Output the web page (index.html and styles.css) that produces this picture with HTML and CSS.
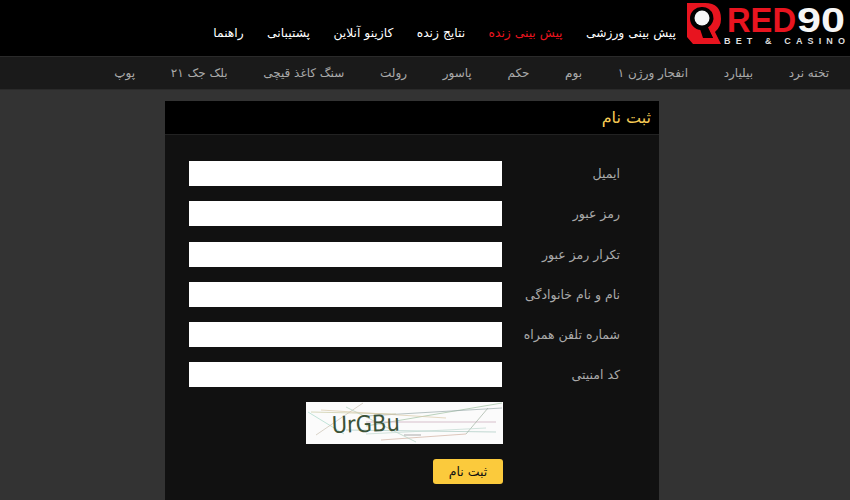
FILE: index.html
```html
<!DOCTYPE html>
<html lang="fa" dir="rtl">
<head>
<meta charset="utf-8">
<title>ثبت نام</title>
<link rel="stylesheet" href="styles.css">
</head>
<body>
<header class="topbar">
  <a class="logo" href="#">
    <svg width="160" height="46" viewBox="0 0 160 46">
      <path fill="#e8141f" d="M1 2H19Q35 2 35 18Q35 26 29 31L35 43H7L1 36Z"/>
      <path fill="#000" d="M16 6A11 11 0 0 1 22 26.500L27 37H21L15 29A11 11 0 0 1 16 6Z"/>
      <path fill="#000" d="M14 28L17 37H27L22 27Z"/>
      <circle cx="16" cy="17" r="7.500" fill="#f6f6f6"/>
      <text class="logo-red" x="41" y="31" textLength="69" lengthAdjust="spacingAndGlyphs">RED</text>
      <text class="logo-num" x="111" y="31" textLength="48" lengthAdjust="spacingAndGlyphs">90</text>
      <text class="logo-sub" x="38" y="43" textLength="121">BET &amp; CASINO</text>
    </svg>
  </a>
  <nav class="mainnav">
    <a href="#">پیش بینی ورزشی</a>
    <a href="#" class="live">پیش بینی زنده</a>
    <a href="#">نتایج زنده</a>
    <a href="#">کازینو آنلاین</a>
    <a href="#">پشتیبانی</a>
    <a href="#">راهنما</a>
  </nav>
</header>
<nav class="subnav">
  <a href="#">تخته نرد</a>
  <a href="#">بیلیارد</a>
  <a href="#">انفجار ورژن ۱</a>
  <a href="#">بوم</a>
  <a href="#">حکم</a>
  <a href="#">پاسور</a>
  <a href="#">رولت</a>
  <a href="#">سنگ کاغذ قیچی</a>
  <a href="#">بلک جک ۲۱</a>
  <a href="#">پوپ</a>
</nav>
<main class="card">
  <h1 class="card-title">ثبت نام</h1>
  <form class="form">
    <label class="row"><span class="label">ایمیل</span><input class="field" type="text"></label>
    <label class="row"><span class="label">رمز عبور</span><input class="field" type="password"></label>
    <label class="row"><span class="label">تکرار رمز عبور</span><input class="field" type="password"></label>
    <label class="row"><span class="label">نام و نام خانوادگی</span><input class="field" type="text"></label>
    <label class="row"><span class="label">شماره تلفن همراه</span><input class="field" type="text"></label>
    <label class="row"><span class="label">کد امنیتی</span><input class="field" type="text"></label>
    <div class="captcha-row">
      <svg class="captcha" width="197" height="42" viewBox="0 0 197 42">
        <rect width="197" height="42" fill="#fbfbfb"/>
        <g fill="none" stroke-width="0.700">
          <path stroke="#9fc0a0" d="M60 24L196 1"/>
          <path stroke="#c9c9a0" d="M5 10L90 12"/>
          <path stroke="#a8d8c8" d="M2 10L38 32"/>
          <path stroke="#c8c0b0" d="M10 33L57 1"/>
          <path stroke="#c8a8b8" d="M60 20L190 20"/>
          <path stroke="#a8c8c0" d="M40 28L190 30"/>
          <path stroke="#d0b0a0" d="M75 38L160 32"/>
          <path stroke="#a0b0a0" d="M160 32L182 6"/>
          <path stroke="#b0d0c0" d="M40 5L110 40"/>
          <path stroke="#9aa" d="M60 14L196 6"/>
          <path stroke="#d8c8a8" d="M15 8L140 16"/>
          <path stroke="#c0d8d0" d="M60 32L180 26"/>
          <path stroke="#888" d="M98 33H115"/>
        </g>
        <text class="captcha-text" x="26" y="31" textLength="68" lengthAdjust="spacingAndGlyphs" transform="rotate(-2 26 31)">UrGBu</text>
      </svg>
    </div>
    <div class="submit-row"><button class="submit" type="button">ثبت نام</button></div>
  </form>
</main>
</body>
</html>
```

FILE: styles.css
```css
* { box-sizing: border-box; }
html, body { margin: 0; height: 100%; overflow: hidden; }
body {
  background: #333;
  font-family: "DejaVu Sans", sans-serif;
  color: #ccc;
}
a { text-decoration: none; }
.topbar {
  height: 56px;
  background: #000;
  display: flex;
  align-items: flex-start;
  padding-right: 4px;
}
.logo { display: block; width: 160px; height: 46px; margin-top: 1px; }
.logo svg { display: block; direction: ltr; }
.logo-red, .logo-num {
  font-family: "Liberation Sans", sans-serif;
  font-weight: 700;
  font-size: 35px;
}
.logo-red { fill: #e8141f; }
.logo-num { fill: #f6f6f6; }
.logo-sub {
  font-family: "Liberation Sans", sans-serif;
  font-weight: 700;
  font-size: 9px;
  fill: #ddd;
}
.mainnav {
  display: flex;
  gap: 23.400px;
  margin-right: 10px;
  padding-top: 24px;
}
.mainnav a { color: #fff; font-size: 12.300px; line-height: 18px; white-space: nowrap; }
.mainnav a.live { color: #e8141f; }
.subnav {
  height: 34px;
  background: #1a1a1a;
  border-top: 1px solid #2a2a2a;
  border-bottom: 1px solid #2a2a2a;
  display: flex;
  align-items: center;
  gap: 35.700px;
  padding-right: 21px;
}
.subnav a { color: #aaa; font-size: 12px; white-space: nowrap; }
.card {
  width: 494px;
  margin: 11px 191px 0 0;
  background: #111;
}
.card-title {
  margin: 0;
  height: 34px;
  background: #000;
  border-bottom: 1px solid #222;
  color: #f7cc55;
  font-size: 16px;
  font-weight: 400;
  line-height: 33px;
  padding-right: 8px;
}
.form { padding: 26px 39px 20px 0; display: flex; flex-direction: column; }
.row {
  display: flex;
  align-items: center;
  height: 25px;
  margin-bottom: 15.250px;
}
.label { width: 118px; font-size: 12.500px; color: #aaa; white-space: nowrap; }
.field {
  width: 313px;
  height: 25px;
  border: 0;
  background: #fff;
  padding: 0;
}
.captcha-row { margin-right: 117px; height: 42px; margin-top: -1px; }
.captcha { display: block; direction: ltr; }
.captcha-text {
  font-family: "DejaVu Sans", sans-serif;
  font-size: 23px;
  fill: #3a5238;
}
.submit-row { margin: 15px 117px 0 0; }
.submit {
  display: block;
  width: 70px;
  height: 25px;
  border: 0;
  border-radius: 3px;
  background: #fbca3c;
  color: #111;
  font-family: "DejaVu Sans", sans-serif;
  font-size: 12.500px;
  padding: 0;
}
```
